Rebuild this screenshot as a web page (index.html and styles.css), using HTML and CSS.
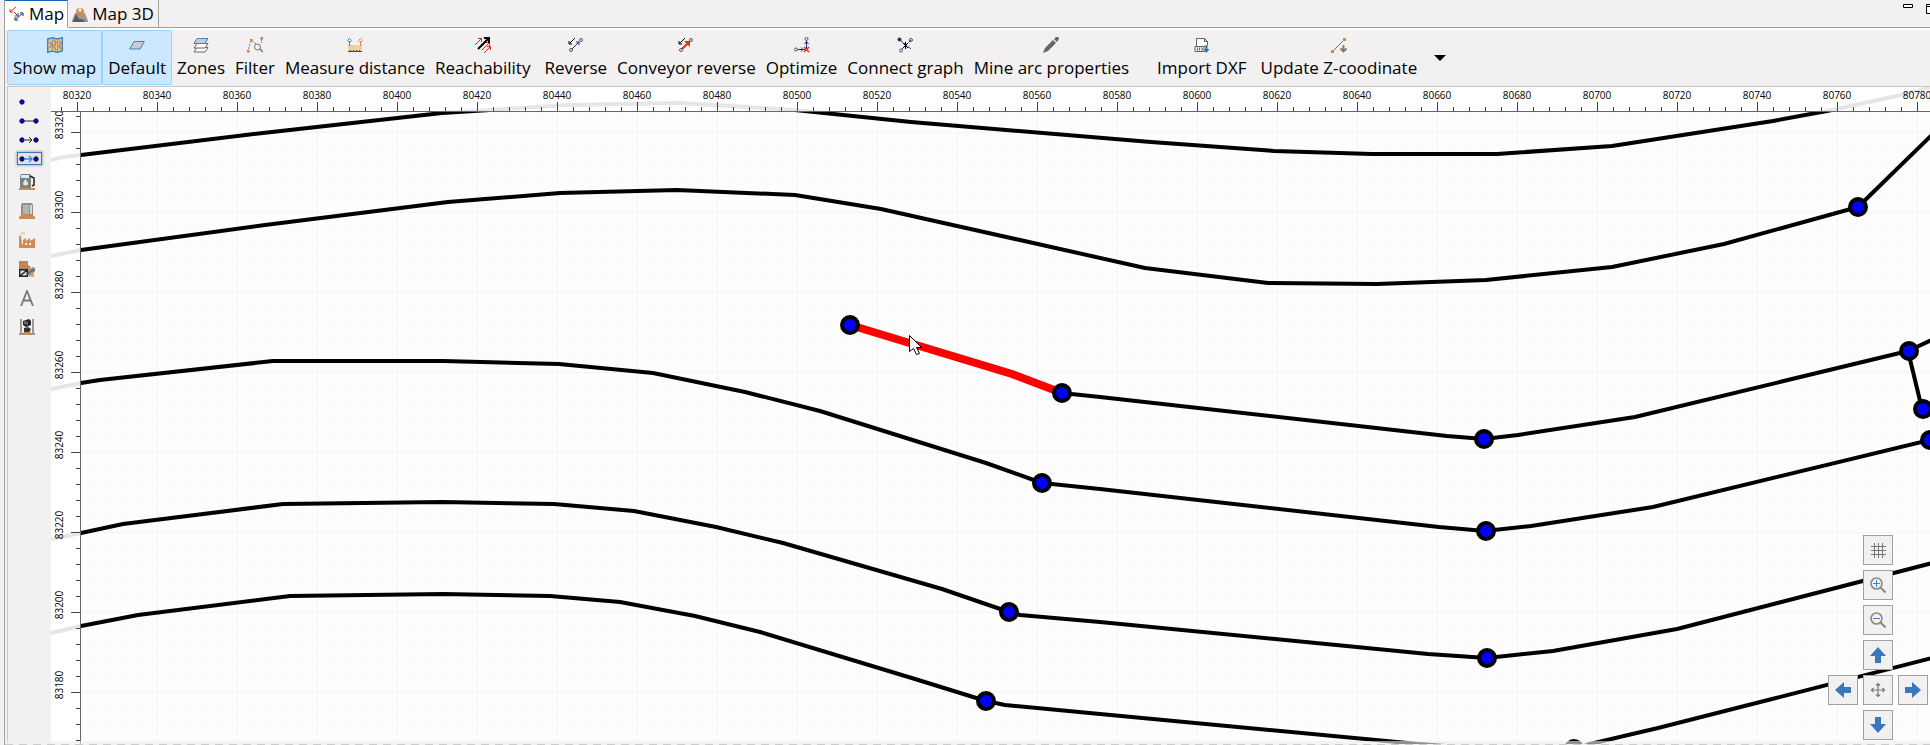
FILE: index.html
```html
<!DOCTYPE html>
<html lang="en">
<head>
    <meta charset="UTF-8">
    <meta name="viewport" content="width=device-width, initial-scale=1.0">
    <title>Map</title>
    <link rel="stylesheet" href="styles.css">
</head>
<body>
    <div class="window">
        <header class="tabs">
            <button class="tab active">
                <svg width="16" height="16" viewBox="0 0 16 16" fill="none">
                    <path d="M7 1L1 6M1 3v3h3" stroke="#e0301e"/>
                    <path d="M5 6l4 4M9 7v3H6" stroke="#444"/>
                    <path d="M6 14l8-7M11 7h3v3M6 11v3h3" stroke="#14307a"/>
                </svg>
                Map
            </button>
            <button class="tab">
                <svg width="16" height="16" viewBox="0 0 16 16">
                    <path d="M0 15l3-8h10l3 8v1H0z" fill="#999"/>
                    <path d="M1 15l3-7 3 5 2 0 3 1 1 2H1z" fill="#5c5c5c"/>
                    <path d="M8 13L4 6a4 4 0 1 1 8 0z" fill="#d08a50"/>
                    <circle cx="8" cy="4" r="1.8" fill="#f4e2d0"/>
                </svg>
                Map 3D
            </button>
            <div class="window-controls">
                <button aria-label="Minimize"><svg width="10" height="10" viewBox="0 0 10 10"><path d="M.5.5h9v3h-9z" fill="#fff" stroke="#000"/></svg></button>
                <button aria-label="Maximize"><svg width="10" height="10" viewBox="0 0 10 10"><path d="M.5.5h9v9h-9zM0 2.5h10" fill="#fff" stroke="#000"/></svg></button>
            </div>
        </header>

        <nav class="toolbar">
            <button class="tool checked">
                <svg width="16" height="16" viewBox="0 0 16 16">
                    <path d="M.7 2l4.600-1.300 5 1.300 5-1.300V14l-5 1.300-5-1.300-4.600 1.300z" fill="#e8c49a" stroke="#3c82c4" stroke-width="1.400"/>
                    <path d="M2 5l3 2-2 4M7 3l2 3-2 3 2 4M12 4l2 3-2 2 2 3" fill="none" stroke="#c8803c" stroke-width="1.500"/>
                    <path d="M5.500 1v13M10.500 2v13" stroke="#7a9ab0"/>
                </svg>
                <span>Show map</span>
            </button>
            <button class="tool checked">
                <svg width="16" height="16" viewBox="0 0 16 16"><path d="M5 4.500h10.300l-4.300 7.500H.7z" fill="#ccc" stroke="#3c82c4"/></svg>
                <span>Default</span>
            </button>
            <button class="tool">
                <svg width="16" height="16" viewBox="0 0 16 16">
                    <path d="M4 10.500h11l-3 4.500H1z" fill="#fff" stroke="#666"/>
                    <path d="M4 6.500h11L12 11H1z" fill="#fff" stroke="#666"/>
                    <path d="M4 1.500h11L12 6.500H1z" fill="#ccc" stroke="#3c82c4"/>
                </svg>
                <span>Zones</span>
            </button>
            <button class="tool">
                <svg width="16" height="16" viewBox="0 0 16 16" fill="none">
                    <path d="M1.500 12l2-7M5 4l4 3M14.500 2v4" stroke="#777" stroke-dasharray="2 1"/>
                    <circle cx="10.500" cy="10" r="3" stroke="#777"/><path d="M13 12l3 3" stroke="#777" stroke-width="1.500"/>
                    <path d="M0 13h2.500v2.500H0zM3 2h2.500v2.500H3zM13.500 0H16v2.500h-2.500z" fill="#cc7830"/>
                </svg>
                <span>Filter</span>
            </button>
            <button class="tool">
                <svg width="16" height="16" viewBox="0 0 16 16">
                    <path d="M1 8h14v6H1z" fill="#f3cf9f"/>
                    <path d="M1 14.500h14M3.500 13v1M6.500 13v1M9.500 13v1M12.500 13v1" stroke="#444"/>
                    <path d="M2.500 4v5M.5 3.500l2-2 2 2-2 2z" fill="#fff" stroke="#3c82c4"/>
                    <path d="M13.500 4v5M11.500 3.500l2-2 2 2-2 2z" fill="#fff" stroke="#d08a50"/>
                </svg>
                <span>Measure distance</span>
            </button>
            <button class="tool">
                <svg width="16" height="16" viewBox="0 0 16 16" fill="none">
                    <path d="M0 8l6-6M3 1.500h3.500V5M7 13l7-7M11 5.500h3.500V9M9 16l6-6M12 9.500h3.500V13" stroke="#e0301e"/>
                    <path d="M3 12L14 1M9 1h5v5" stroke="#000" stroke-width="2"/>
                </svg>
                <span>Reachability</span>
            </button>
            <span class="separator"></span>
            <button class="tool">
                <svg width="16" height="16" viewBox="0 0 16 16" fill="none">
                    <path d="M7 1L1 7M1 4v3h3" stroke="#000"/>
                    <path d="M4 12l7-7M8 5h3v3" stroke="#14307a"/>
                    <circle cx="3" cy="13" r="1.500" stroke="#555"/><circle cx="13" cy="3" r="1.500" stroke="#555"/>
                </svg>
                <span>Reverse</span>
            </button>
            <button class="tool">
                <svg width="16" height="16" viewBox="0 0 16 16" fill="none">
                    <path d="M7 1L1 7M1 4v3h3" stroke="#000"/>
                    <path d="M4 12l6-6" stroke="#e0301e" stroke-width="2"/><path d="M6 4h6v6z" fill="#e0301e"/>
                    <circle cx="3" cy="13" r="1.500" stroke="#555"/><circle cx="13" cy="3" r="1.500" stroke="#555"/>
                </svg>
                <span>Conveyor reverse</span>
            </button>
            <button class="tool">
                <svg width="16" height="16" viewBox="0 0 16 16" fill="none">
                    <path d="M4 12.500h7M7 10.500l2 2-2 2M12.500 4v8M10.500 7l2-2.500 2 2.500" stroke="#14307a"/>
                    <path d="M10 10l5 5M15 10l-5 5" stroke="#e0301e" stroke-width="1.500"/>
                    <circle cx="2" cy="12.500" r="1.500" stroke="#555"/><circle cx="12.500" cy="2" r="1.500" stroke="#555"/>
                </svg>
                <span>Optimize</span>
            </button>
            <button class="tool">
                <svg width="16" height="16" viewBox="0 0 16 16" fill="none">
                    <path d="M3 3l11 9M5 12l9-9" stroke="#14307a" stroke-dasharray="4 1"/>
                    <path d="M6 6l5 5M11 6l-5 5M8.500 5v7" stroke="#000"/>
                    <circle cx="2.500" cy="2.500" r="2" fill="#334"/><circle cx="4" cy="13.500" r="1.500" stroke="#555"/><circle cx="14" cy="3" r="1.500" stroke="#555"/>
                </svg>
                <span>Connect graph</span>
            </button>
            <button class="tool">
                <svg width="16" height="16" viewBox="0 0 16 16"><path d="M0 16l2-5 8-8 3 3-8 8zM11 2l2-2h2l1 1v1l-2 3z" fill="#666"/></svg>
                <span>Mine arc properties</span>
            </button>
            <span class="separator wide"></span>
            <button class="tool">
                <svg width="16" height="16" viewBox="0 0 16 16" fill="none">
                    <path d="M2.500 9V1.500h8l3 3V8M10.500 1.500v3h3" stroke="#666" fill="#fff"/>
                    <path d="M1 9.500h10v5H1zM3.500 10.500v3M5.500 10.500v3M7.500 10.500l2 3M9.500 10.500l-2 3" stroke="#666"/>
                    <path d="M12.500 8v6" stroke="#2f74ba" stroke-width="2"/><path d="M9.500 12h6l-3 4z" fill="#2f74ba"/>
                </svg>
                <span>Import DXF</span>
            </button>
            <button class="tool dropdown">
                <svg width="16" height="16" viewBox="0 0 16 16">
                    <path d="M2 14L13 3" stroke="#777"/>
                    <path d="M0 13h3v3H0zM12 1h3v3h-3z" fill="#d9853f"/>
                    <path d="M12.500 8v6M9.500 11.500l3 3 3-3" fill="none" stroke="#777" stroke-width="1.800"/>
                </svg>
                <span>Update Z-coodinate</span>
            </button>
            <button class="more" aria-label="More"><svg width="12" height="6" viewBox="0 0 12 6"><path d="M0 0h12L6 6z"/></svg></button>
        </nav>

        <main class="workspace">
            <aside class="palette">
                <button class="arc" aria-label="Node"><svg width="22" height="10" viewBox="0 0 22 10"><circle cx="4" cy="5" r="2.200" class="dot"/></svg></button>
                <button class="arc" aria-label="Arc"><svg width="22" height="10" viewBox="0 0 22 10"><path d="M4 5h14" stroke="#666" stroke-width="1.400"/><circle cx="4" cy="5" r="2.200" class="dot"/><circle cx="18" cy="5" r="2.200" class="dot"/></svg></button>
                <button class="arc" aria-label="Directed arc"><svg width="22" height="10" viewBox="0 0 22 10"><path d="M7 5h7M11 2l3 3-3 3" fill="none" stroke="#222"/><circle cx="4" cy="5" r="2.200" class="dot"/><circle cx="18" cy="5" r="2.200" class="dot"/></svg></button>
                <button class="arc selected" aria-label="Continuous arc"><svg width="22" height="10" viewBox="0 0 22 10"><path d="M7 5h7M11 2l3 3-3 3" fill="none" stroke="#2f8af0" stroke-width="1.400"/><circle cx="4" cy="5" r="2.200" class="dot"/><circle cx="18" cy="5" r="2.200" class="dot"/></svg></button>
                <button class="item" aria-label="Fuel station">
                    <svg width="16" height="16" viewBox="0 0 16 16">
                        <path d="M0 14h16v2H0z" fill="#d0884c"/><path d="M1 14V2l1-2h9l1 2v12z" fill="#7c8082"/>
                        <path d="M2 1h8v3H2z" fill="#d8eeee"/><path d="M6.500 5L9 9a2.500 2.500 0 1 1-5 0z" fill="#d8f0f0"/>
                        <path d="M11 2l4 2v7l-2 1" fill="none" stroke="#222" stroke-width="1.500"/>
                    </svg>
                </button>
                <button class="item" aria-label="Ore bunker">
                    <svg width="16" height="16" viewBox="0 0 16 16">
                        <path d="M2 13V2l1-2h10l1 2v11z" fill="#8c8f90"/><path d="M4 2h6v9H4z" fill="#b4b6b6"/><path d="M11 2h2v9h-2z" fill="#d4dada"/>
                        <path d="M0 16v-2l4-4 3 1 3 1 3-1 3 3v2z" fill="#d0884c"/>
                    </svg>
                </button>
                <button class="item" aria-label="Factory">
                    <svg width="16" height="16" viewBox="0 0 16 16">
                        <path d="M0 16V4h2l1 8h1V8l3-2v3l4-3v3l5-3v10z" fill="#d48c50"/>
                        <path d="M6 11h2v2H6zM10 11h2v2h-2z" fill="#f2f0f1"/><path d="M1 3l2-2h3" fill="none" stroke="#d9b080"/>
                    </svg>
                </button>
                <button class="item" aria-label="Crusher">
                    <svg width="16" height="16" viewBox="0 0 16 16">
                        <path d="M0 0h9v4l3 2-2 3H0z" fill="#b98758"/><path d="M8 10l6-4 2 1v3l-6 6z" fill="#888"/>
                        <path d="M.7 8.700h7.600v6.600H.7zM1 15l7-6" fill="#ddd" stroke="#222" stroke-width="1.400"/><path d="M8 14l4-4 4-1" fill="none" stroke="#555"/><path d="M12 12h3v4h-3z" fill="#dca36c"/>
                    </svg>
                </button>
                <button class="item" aria-label="Text">
                    <svg width="16" height="16" viewBox="0 0 16 16"><path d="M2 16L8 1l6 15M4 10.500h8" fill="none" stroke="#777" stroke-width="1.800"/></svg>
                </button>
                <button class="item" aria-label="Shaft">
                    <svg width="16" height="16" viewBox="0 0 16 16">
                        <path d="M1 0h2v16H1zM13 0h2v16h-2z" fill="#999"/><path d="M0 14h16v2H0z" fill="#999"/>
                        <path d="M4 2l6-2 2 2v4L7 8 4 6z" fill="#222"/><path d="M5 2l4 1v3L5 5z" fill="#666"/><path d="M5 9l4-1 3 2-2 4H5z" fill="#333"/>
                        <path d="M3 16l2-3h6l2 3z" fill="#d0884c"/>
                    </svg>
                </button>
            </aside>

            <section class="map">
                <svg class="canvas" id="canvas">
                    <defs>
                        <pattern id="minorGrid" x="26" y="45" width="16" height="16" patternUnits="userSpaceOnUse">
                            <path d="M.5 0v16M0 .5h16" class="grid-minor"/>
                        </pattern>
                        <pattern id="majorGrid" x="26" y="45" width="80" height="80" patternUnits="userSpaceOnUse">
                            <path d="M.5 0v80M0 .5h80" class="grid-major"/>
                        </pattern>
                        <pattern id="topTicks" x="26" y="0" width="80" height="25" patternUnits="userSpaceOnUse">
                            <path d="M.5 15v10M16.500 20v5M32.500 20v5M48.500 20v5M64.500 20v5" class="tick"/>
                        </pattern>
                        <pattern id="leftTicks" x="0" y="45" width="30" height="80" patternUnits="userSpaceOnUse">
                            <path d="M20 .5h10M25 16.500h5M25 32.500h5M25 48.500h5M25 64.500h5" class="tick"/>
                        </pattern>
                        <clipPath id="rulerArea"><rect y="25" width="30" height="100%"/></clipPath>
                    </defs>
                    <rect x="30" y="25" width="100%" height="100%" fill="url(#minorGrid)"/>
                    <rect x="30" y="25" width="100%" height="100%" fill="url(#majorGrid)"/>

                    <g transform="translate(-51 -87)">
                        <g class="roads">
                            <polyline points="51,160 63,157 81,155 263,133 442,113 568,105 680,103 795,110 911,122 1151,142 1274,151 1372,154 1497,154 1612,146 1773,121 1827,111 1897,96 1940,85"/>
                            <polyline points="51,256 81,250 265,225 448,202 560,193 677,190 795,195 881,209 1145,268 1268,283 1377,284 1486,280 1612,267 1724,244 1858,207 1940,127"/>
                            <polyline points="1062,393 1100,397 1447,436 1484,439 1518,435 1635,417 1908,351 1940,336"/>
                            <polyline points="1908,351 1922,409"/>
                            <polyline points="51,389 81,383 100,380 273,361 443,361 559,364 653,373 745,392 820,411 986,463 1042,483 1100,489 1439,527 1485,531 1531,526 1653,507 1930,440"/>
                            <polyline points="51,539 81,533 123,524 283,504 442,502 554,504 634,511 716,527 783,543 942,589 1009,612 1020,615 1100,622 1428,654 1487,658 1553,651 1677,629 1940,561"/>
                            <polyline points="51,633 81,626 138,615 290,596 443,594 550,596 620,602 695,616 760,632 915,679 986,701 1005,705 1100,714 1418,744 1573,755"/>
                            <polyline points="1573,750 1590,744 1658,728 1772,699 1940,656"/>
                        </g>
                        <polyline class="road-selected" points="850,325 1012,374 1062,393"/>
                        <g class="nodes">
                            <circle cx="850" cy="325" r="8"/>
                            <circle cx="1062" cy="393" r="8"/>
                            <circle cx="1484" cy="439" r="8"/>
                            <circle cx="1858" cy="207" r="8"/>
                            <circle cx="1909" cy="351" r="8"/>
                            <circle cx="1923" cy="409" r="8"/>
                            <circle cx="1930" cy="440" r="8"/>
                            <circle cx="1042" cy="483" r="8"/>
                            <circle cx="1486" cy="531" r="8"/>
                            <circle cx="1009" cy="612" r="8"/>
                            <circle cx="1487" cy="658" r="8"/>
                            <circle cx="986" cy="701" r="8"/>
                            <circle cx="1574" cy="749" r="8"/>
                        </g>
                        <path d="M909.500 335.500v16l4-3 3 6 3-1-3-6h5z" fill="#fff" stroke="#000"/>
                    </g>

                    <!-- rulers -->
                    <rect width="100%" height="25" class="ruler"/>
                    <rect y="25" width="30" height="100%" class="ruler"/>
                    <rect width="100%" height="25" fill="url(#topTicks)"/>
                    <rect y="25" width="30" height="100%" fill="url(#leftTicks)"/>
                    <rect y="24" width="100%" height="1" class="axis"/>
                    <rect x="29" y="25" width="1" height="100%" class="axis"/>
                    <g class="ruler-text" id="topLabels"></g>
                    <g clip-path="url(#rulerArea)"><g class="ruler-text" id="leftLabels"></g></g>
                </svg>

                <div class="map-controls">
                    <button class="grid-btn" aria-label="Grid"><svg width="16" height="16" viewBox="0 0 16 16"><path d="M4.500 1v15M8.500 1v15M12.500 1v15M1 4.500h15M1 8.500h15M1 12.500h15" stroke="#777"/></svg></button>
                    <button class="zoom-in" aria-label="Zoom in"><svg width="16" height="16" viewBox="0 0 16 16" fill="none"><circle cx="6.500" cy="6.500" r="5.500" stroke="#888" stroke-width="1.600"/><path d="M10.500 10.500l5 5" stroke="#888" stroke-width="2"/><path d="M3 6.500h7M6.500 3v7" stroke="#3c82c4"/></svg></button>
                    <button class="zoom-out" aria-label="Zoom out"><svg width="16" height="16" viewBox="0 0 16 16" fill="none"><circle cx="6.500" cy="6.500" r="5.500" stroke="#888" stroke-width="1.600"/><path d="M10.500 10.500l5 5" stroke="#888" stroke-width="2"/><path d="M3 6.500h7" stroke="#3c82c4"/></svg></button>
                    <button class="up" aria-label="Up"><svg width="16" height="16" viewBox="0 0 16 16"><path d="M8 0l8 9h-5v7H5V9H0z" fill="#3778bd"/></svg></button>
                    <button class="left" aria-label="Left"><svg width="16" height="16" viewBox="0 0 16 16"><path d="M0 8l9-8v5h7v6H9v5z" fill="#3778bd"/></svg></button>
                    <button class="center" aria-label="Center"><svg width="16" height="16" viewBox="0 0 16 16" fill="none"><path d="M8 1v14M1 8h14M6 3.500l2-2 2 2M6 12.500l2 2 2-2M3.500 6l-2 2 2 2M12.500 6l2 2-2 2" stroke="#777" stroke-width="1.200"/></svg></button>
                    <button class="right" aria-label="Right"><svg width="16" height="16" viewBox="0 0 16 16"><path d="M16 8L7 0v5H0v6h7v5z" fill="#3778bd"/></svg></button>
                    <button class="down" aria-label="Down"><svg width="16" height="16" viewBox="0 0 16 16"><path d="M8 16l8-9h-5V0H5v7H0z" fill="#3778bd"/></svg></button>
                </div>
            </section>
        </main>
        <div class="bottom-edge"></div>
    </div>

    <script>
        // Ruler labels, one every 20 units (80px)
        const canvas = document.getElementById('canvas');
        const topLabels = document.getElementById('topLabels');
        const leftLabels = document.getElementById('leftLabels');

        function addLabel(parent, value, transform) {
            const text = document.createElementNS('http://www.w3.org/2000/svg', 'text');
            text.textContent = value;
            text.setAttribute('transform', transform);
            parent.appendChild(text);
        }

        function drawLabels() {
            topLabels.innerHTML = '';
            leftLabels.innerHTML = '';
            for (let x = 26, value = 80320; x < canvas.clientWidth; x += 80, value += 20) {
                addLabel(topLabels, value, `translate(${x} 12)`);
            }
            for (let y = 38, value = 83320; y < canvas.clientHeight; y += 80, value -= 20) {
                addLabel(leftLabels, value, `translate(12 ${y}) rotate(-90)`);
            }
        }

        drawLabels();
        window.addEventListener('resize', drawLabels);
    </script>
</body>
</html>
```
FILE: styles.css
```css
* {
    box-sizing: border-box;
}

body {
    margin: 0;
    background: #f2f0f1;
    color: #000;
    font-family: "Open Sans", "Noto Sans", sans-serif;
    font-size: 17px;
}

button {
    margin: 0;
    padding: 0;
    border: none;
    background: none;
    color: inherit;
    font: inherit;
}

svg {
    display: block;
    flex: none;
}

.window {
    position: relative;
    display: flex;
    flex-direction: column;
    height: 100vh;
    margin-left: 4px;
    border-left: 1px solid #a0a0a0;
    overflow: hidden;
}

/* tabs */
.tabs {
    display: flex;
    flex: none;
    height: 30px;
    border-bottom: 2px solid #fff;
    box-shadow: inset 0 -1px #a0a0a0;
}

.tab {
    display: flex;
    align-items: center;
    gap: 4px;
    height: 28px;
    padding: 0 4px;
    border-right: 1px solid #a0a0a0;
    border-bottom: 1px solid #a0a0a0;
    line-height: 24px;
    white-space: nowrap;
}

.tab.active {
    padding-right: 3px;
    background: #fff;
    border-top: 1px solid #1c5fc0;
    border-bottom-color: #fff;
}

.window-controls {
    display: flex;
    align-items: flex-start;
    gap: 13px;
    margin-left: auto;
    margin-right: -6px;
    padding-top: 4px;
}

/* toolbar */
.toolbar {
    display: flex;
    flex: none;
    height: 56px;
    padding-left: 2px;
    white-space: nowrap;
}

.tool {
    display: flex;
    flex-direction: column;
    align-items: center;
    gap: 3px;
    height: 55px;
    padding: 6px 4px 0;
    border: 1px solid transparent;
    border-radius: 2px;
    line-height: 24px;
}

.tool.checked {
    padding: 6px 5px 0;
    background: #cce8ff;
    border-color: #99d1ff;
}

.tool.dropdown {
    padding: 6px 8px 0;
}

.separator {
    width: 4px;
}

.separator.wide {
    width: 18px;
}

.more {
    align-self: center;
    padding: 0 8px;
}

/* workspace */
.workspace {
    display: flex;
    flex: 1;
    min-height: 0;
    margin-left: 2px;
    border-top: 1px solid #c8c8c8;
    border-left: 1px solid #c8c8c8;
}

.palette {
    display: flex;
    flex: none;
    flex-direction: column;
    align-items: flex-start;
    width: 43px;
    padding: 5px 0 0 9px;
}

.palette .arc {
    height: 11px;
    margin: 4px 0;
    padding: 0 1px;
}

.palette .arc.selected {
    height: 13px;
    margin: 3px 0;
    padding: 0 1px 0 0;
    border: 1px solid #3c78b4;
    background: #e0e2e6;
    box-shadow: 0 0 2px 1px #bbb;
}

.palette .item {
    padding: 6px 2px 7px;
}

.dot {
    fill: #0000f0;
    stroke: #111;
}

/* map */
.map {
    position: relative;
    flex: 1;
    min-width: 0;
    background: #fdfdfd;
    overflow: hidden;
}

.canvas {
    width: 100%;
    height: 100%;
}

.grid-minor {
    stroke: #fbfbfb;
}

.grid-major {
    stroke: #f4f4f4;
}

.roads {
    fill: none;
    stroke: #000;
    stroke-width: 4px;
    stroke-linejoin: round;
}

.road-selected {
    fill: none;
    stroke: #f00;
    stroke-width: 8px;
}

.nodes {
    fill: #00f;
    stroke: #000;
    stroke-width: 4px;
}

.ruler {
    fill: #fff;
    fill-opacity: 0.9;
}

.tick {
    stroke: #444;
}

.axis {
    fill: #666;
}

.ruler-text {
    font-size: 10px;
    text-anchor: middle;
}

.map-controls {
    position: absolute;
    right: 2px;
    bottom: 5px;
    display: grid;
    grid-template-columns: repeat(3, 30px);
    grid-template-areas:
        ". grid ."
        ". in ."
        ". out ."
        ". up ."
        "left center right"
        ". down .";
    gap: 5px;
}

.map-controls button {
    display: grid;
    place-items: center;
    height: 30px;
    border: 1px solid #a0a0a0;
    background: #f2f0f1;
}

.grid-btn { grid-area: grid; }
.zoom-in { grid-area: in; }
.zoom-out { grid-area: out; }
.up { grid-area: up; }
.left { grid-area: left; }
.center { grid-area: center; }
.right { grid-area: right; }
.down { grid-area: down; }

/* translucent strip with the dashed line, over the map */
.bottom-edge {
    position: absolute;
    left: 0;
    right: 0;
    bottom: 0;
    height: 4px;
    background: repeating-linear-gradient(90deg, #ccc 0 8px, #f2f2f2 8px 14px) bottom / 100% 1px no-repeat, rgba(238, 238, 238, 0.6);
}
```
